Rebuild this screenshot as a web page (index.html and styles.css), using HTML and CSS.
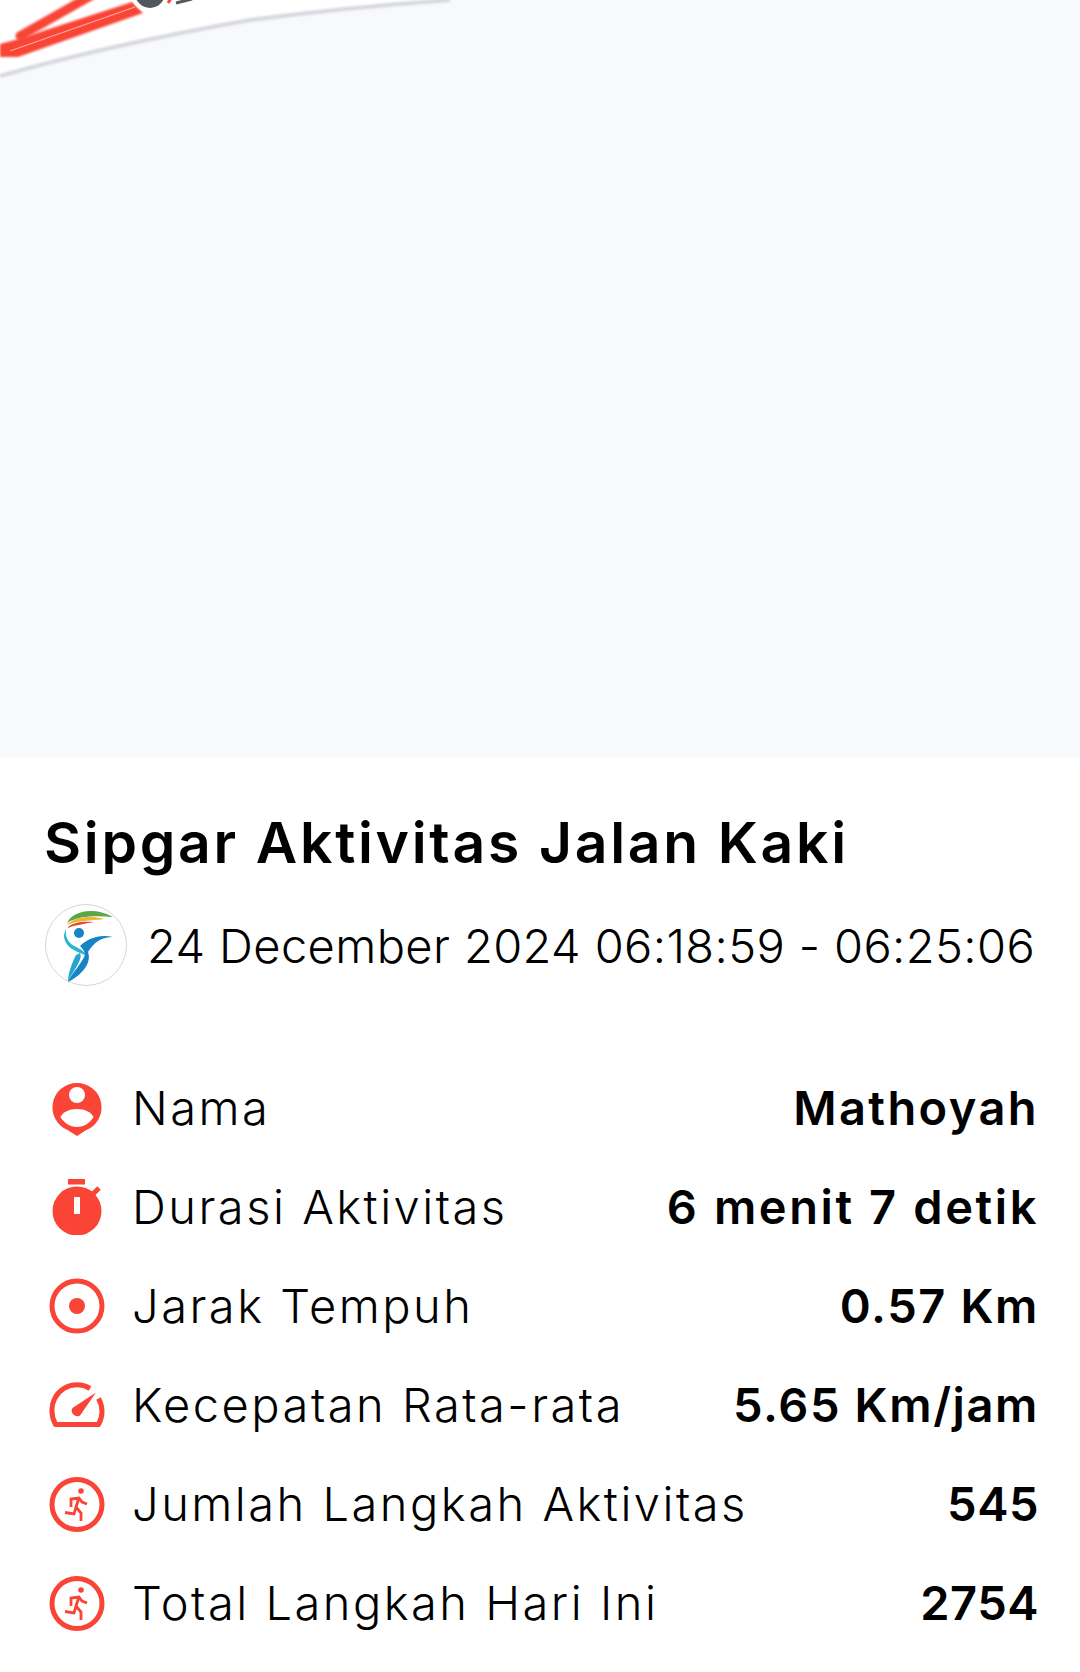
FILE: index.html
```html
<!DOCTYPE html>
<html>
<head>
    <title>Sipgar Aktivitas Jalan Kaki</title>
<link rel="stylesheet" href="styles.css">
</head>
<body>

<div class="map">
  <svg class="map-svg" viewBox="0 0 1080 757" width="1080" height="757">
    <defs>
      <filter id="soft"><feGaussianBlur stdDeviation="0.8"/></filter>
    </defs>
    <path d="M0 0H450C380 5 320 11 250 20C160 36 70 56 0 76Z" fill="#ffffff"/>
    <path d="M0 76C70 56 160 36 250 20C320 11 380 5 450 0" fill="none" stroke="#d6d8de" stroke-width="4" filter="url(#soft)"/>
    <path d="M20 36L94 -6" fill="none" stroke="#f94436" stroke-width="9" stroke-linecap="round" filter="url(#soft)"/>
    <path d="M0 44L15 40L132 2L143 13L18 57L0 57Z" fill="#f94436" filter="url(#soft)"/>
    <path d="M10 51L135 7" fill="none" stroke="#ffa9a1" stroke-width="1.200"/>
    <circle cx="150" cy="-7" r="19" fill="#ffffff"/>
    <circle cx="150" cy="-7" r="11" fill="none" stroke="#54585e" stroke-width="8"/>
    <path d="M168 3L172 -3" stroke="#f94436" stroke-width="3"/>
    <path d="M176 3L192 -1" stroke="#54585e" stroke-width="3"/>
  </svg>
</div>

<div class="info">
  <h1 class="title">Sipgar Aktivitas Jalan Kaki</h1>

  <div class="date-row">
    <svg class="logo" viewBox="0 0 84 84" width="84" height="84">
      <circle cx="42" cy="42" r="40.500" fill="#ffffff" stroke="#d6d6d6" stroke-width="1"/>
      <path d="M23 20C28 8 50 3 69 14C54 13 36 12 23 20Z" fill="#5aa845"/>
      <path d="M23 22C30 14 46 12 60 16C48 18 34 17 23 22Z" fill="#f2b533"/>
      <path d="M23 25C28 19 40 18 50 19C40 21 31 22 23 25Z" fill="#e4472f"/>
      <circle cx="35" cy="30" r="5" fill="#1583c4"/>
      <path d="M22 26C21 34 24 40 32 44C38 47 41 49 43 53L36 50C28 47 21 42 20 34C20 30 21 28 22 26Z" fill="#27b8d0"/>
      <path d="M36 43C44 36 54 31 69 34C58 34 50 39 44 49C48 60 38 72 24 79C28 70 38 60 41 52C41 48 38 45 36 43Z" fill="#1583c4"/>
      <path d="M36 50C39 57 30 66 24 79C24 70 28 60 32 52Z" fill="#27a5cf"/>
    </svg>
    <span class="date-text">24 December 2024 06:18:59 - 06:25:06</span>
  </div>

  <div class="stats">
    <div class="stat">
      <svg class="icon" viewBox="0 0 56 56" width="56" height="56">
        <path d="M28 3a24.500 24.500 0 0 1 9 47.300L28 56L19 50.300A24.500 24.500 0 0 1 28 3Z" fill="#f94436"/>
        <circle cx="28" cy="15" r="8" fill="#fff"/>
        <path d="M28 29C20 29 14 32 11.500 37C15 43 21 47 28 47C35 47 41 43 44.500 37C42 32 36 29 28 29Z" fill="#fff"/>
      </svg>
      <span class="label">Nama</span>
      <span class="value">Mathoyah</span>
    </div>
    <div class="stat">
      <svg class="icon" viewBox="0 0 56 56" width="56" height="56">
        <rect x="19" y="0" width="17" height="5.500" fill="#f94436"/>
        <circle cx="28" cy="32" r="24.500" fill="#f94436"/>
        <path d="M44 15L50 9" stroke="#f94436" stroke-width="5"/>
        <rect x="25" y="18" width="6" height="17" fill="#fff"/>
      </svg>
      <span class="label">Durasi Aktivitas</span>
      <span class="value value-wide">6 menit 7 detik</span>
    </div>
    <div class="stat">
      <svg class="icon" viewBox="0 0 56 56" width="56" height="56">
        <circle cx="28" cy="28" r="25" fill="none" stroke="#f94436" stroke-width="5"/>
        <circle cx="28" cy="28" r="8" fill="#f94436"/>
      </svg>
      <span class="label">Jarak Tempuh</span>
      <span class="value value-mixed">0.57 Km</span>
    </div>
    <div class="stat">
      <svg class="icon" viewBox="0 0 56 56" width="56" height="56">
        <path d="M41 11.500A25 25 0 0 0 3 34.500C3 39 4 43 6.500 47.500H49.500C52 43 53 39 53 34.500C53 29 52 26 49.500 21.500" fill="none" stroke="#f94436" stroke-width="5" stroke-linejoin="round"/>
        <path d="M47 15.500L31 38.500A5.500 5.500 0 0 1 23.500 31Z" fill="#f94436"/>
      </svg>
      <span class="label">Kecepatan Rata-rata</span>
      <span class="value value-mixed">5.65 Km/jam</span>
    </div>
    <div class="stat">
      <svg class="icon" viewBox="0 0 56 56" width="56" height="56">
        <circle cx="28" cy="28.500" r="25" fill="none" stroke="#f94436" stroke-width="5"/>
        <circle cx="32" cy="15" r="2.800" fill="#f94436"/>
        <path d="M16 36.500L25 38L27 31L32 37V45M22 31V23L30 22L33 26L38 28M30 22L27 31" fill="none" stroke="#f94436" stroke-width="2.800"/>
      </svg>
      <span class="label">Jumlah Langkah Aktivitas</span>
      <span class="value value-num">545</span>
    </div>
    <div class="stat">
      <svg class="icon" viewBox="0 0 56 56" width="56" height="56">
        <circle cx="28" cy="28.500" r="25" fill="none" stroke="#f94436" stroke-width="5"/>
        <circle cx="32" cy="15" r="2.800" fill="#f94436"/>
        <path d="M16 36.500L25 38L27 31L32 37V45M22 31V23L30 22L33 26L38 28M30 22L27 31" fill="none" stroke="#f94436" stroke-width="2.800"/>
      </svg>
      <span class="label">Total Langkah Hari Ini</span>
      <span class="value value-num">2754</span>
    </div>
  </div>
</div>

</body>
</html>
```

FILE: styles.css
```css
body {
  margin: 0;
  background-color: #ffffff;
  font-family: Inter, "Noto Sans", sans-serif;
  color: #000000;
}

.map {
  height: 757px;
  background-color: #f8f9fb;
  overflow: hidden;
}

.map-svg {
  display: block;
}

.info {
  padding: 54px 41px 0 44px;
}

.title {
  margin: 0;
  font-size: 57px;
  line-height: 64px;
  font-weight: 600;
  letter-spacing: 2.7px;
}

.date-row {
  display: flex;
  align-items: center;
  gap: 19px;
  margin-top: 28px;
}

.logo {
  flex: none;
}

.date-text {
  font-size: 47px;
  font-weight: 300;
  letter-spacing: 0.4px;
  white-space: nowrap;
}

.stats {
  margin-top: 71px;
}

.stat {
  display: flex;
  align-items: center;
  height: 99px;
}

.icon {
  flex: none;
  margin-left: 5px;
  margin-right: 27px;
}

.label {
  font-size: 47px;
  font-weight: 300;
  letter-spacing: 2.5px;
  white-space: nowrap;
}

.value {
  margin-left: auto;
  font-size: 47px;
  font-weight: 600;
  letter-spacing: 2.4px;
  white-space: nowrap;
}

.value-wide {
  letter-spacing: 2.6px;
}

.value-mixed {
  letter-spacing: 1.6px;
}

.value-num {
  letter-spacing: 0.5px;
}
```
